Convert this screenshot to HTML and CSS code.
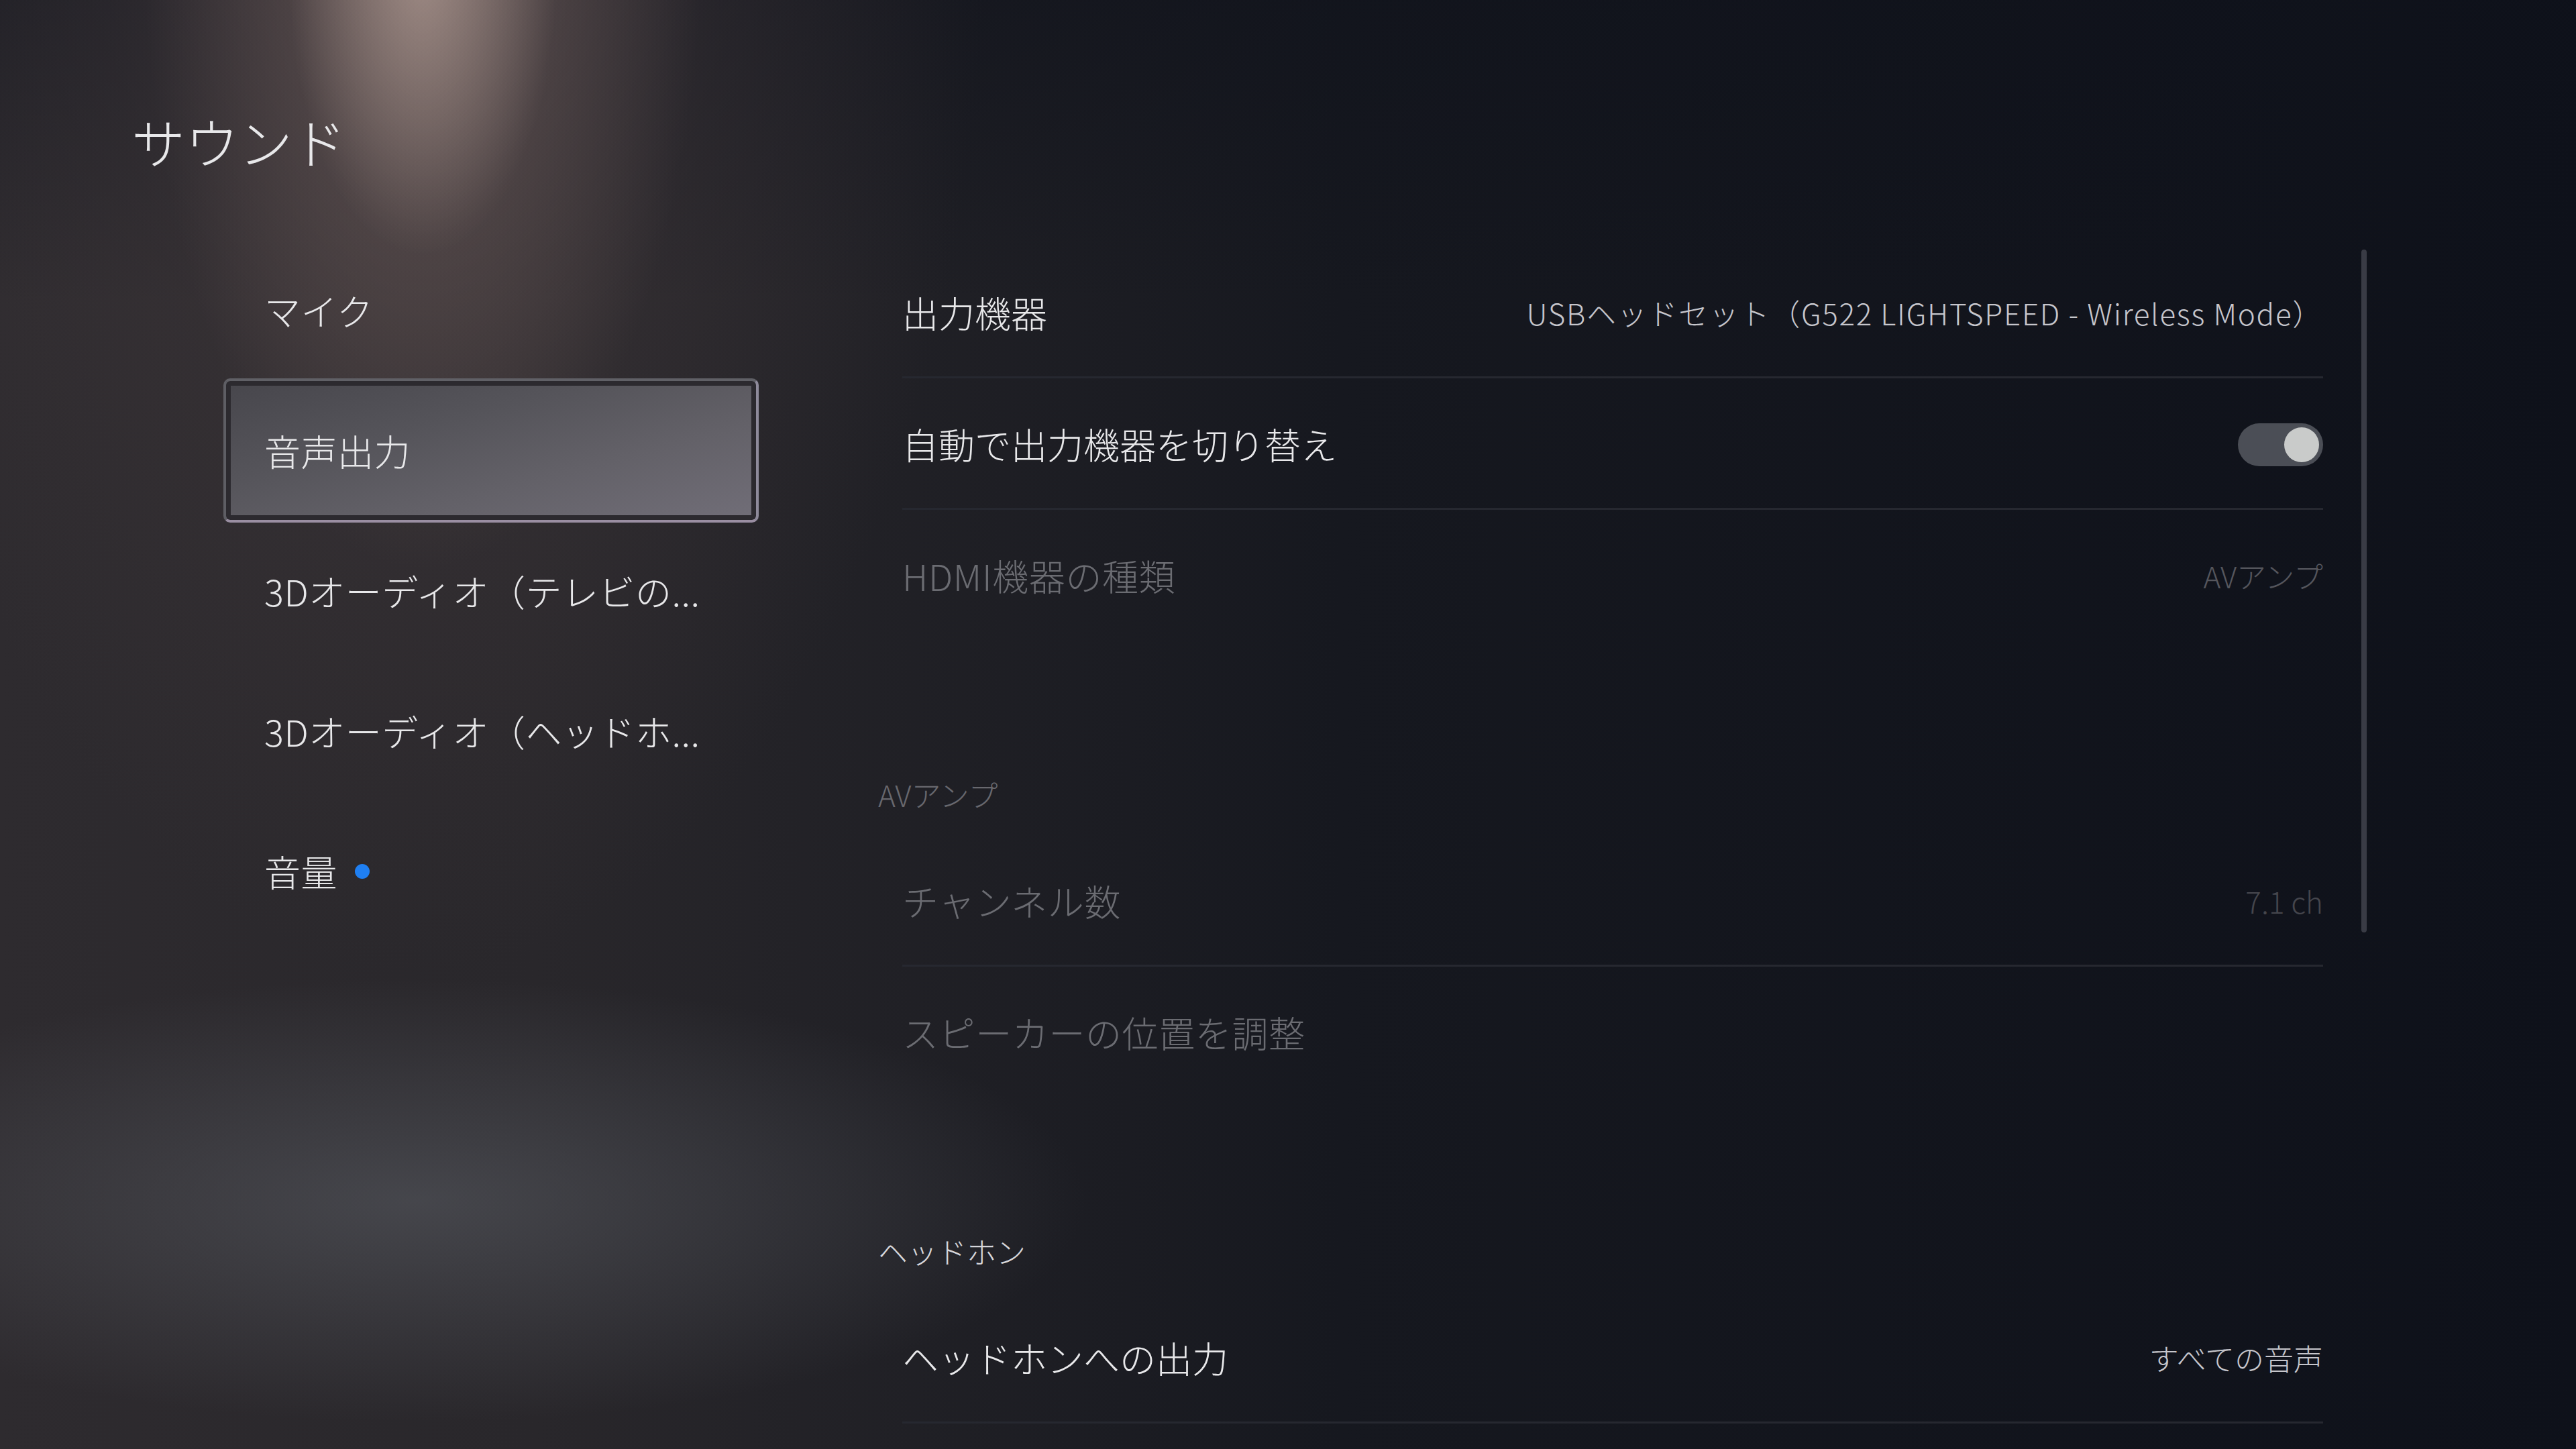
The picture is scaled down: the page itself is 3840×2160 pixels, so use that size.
FILE: index.html
```html
<!DOCTYPE html>
<html lang="ja">
<head>
    <meta charset="UTF-8">
    <meta name="viewport" content="width=device-width, initial-scale=1.0">
    <title>サウンド</title>
    <link rel="stylesheet" href="styles.css">
</head>
<body>
    <div class="screen">
        <header class="page-header">
            <h1 class="page-title">サウンド</h1>
        </header>

        <div class="layout">
            <!-- Menu de gauche -->
            <nav class="side-menu">
                <div class="menu-item">マイク</div>
                <div class="menu-item selected">音声出力</div>
                <div class="menu-item">3Dオーディオ（テレビの...</div>
                <div class="menu-item">3Dオーディオ（ヘッドホ...</div>
                <div class="menu-item">音量<span class="badge-dot"></span></div>
            </nav>

            <!-- Liste des réglages -->
            <main class="settings">
                <div class="settings-list">
                    <div class="setting-row">
                        <span class="setting-label">出力機器</span>
                        <span class="setting-value spaced">USBヘッドセット（G522 LIGHTSPEED - Wireless Mode）</span>
                    </div>
                    <div class="setting-row">
                        <span class="setting-label">自動で出力機器を切り替え</span>
                        <span class="toggle"><span class="toggle-knob"></span></span>
                    </div>
                    <div class="setting-row disabled no-line">
                        <span class="setting-label">HDMI機器の種類</span>
                        <span class="setting-value">AVアンプ</span>
                    </div>

                    <div class="section-title disabled">AVアンプ</div>
                    <div class="setting-row disabled">
                        <span class="setting-label">チャンネル数</span>
                        <span class="setting-value faint">7.1 ch</span>
                    </div>
                    <div class="setting-row disabled no-line">
                        <span class="setting-label">スピーカーの位置を調整</span>
                    </div>

                    <div class="section-title">ヘッドホン</div>
                    <div class="setting-row">
                        <span class="setting-label">ヘッドホンへの出力</span>
                        <span class="setting-value">すべての音声</span>
                    </div>
                </div>
                <div class="scrollbar"></div>
            </main>
        </div>
    </div>
</body>
</html>
```

FILE: styles.css
```css
/* Page entière */
html, body {
    margin: 0;
    padding: 0;
}

body {
    width: 3840px;
    height: 2160px;
    overflow: hidden;
    font-family: "Noto Sans CJK JP", "Noto Sans", sans-serif;
    font-weight: 300;
    color: #e6e6e8;
    background-color: #0f121b;
    background-image:
        radial-gradient(ellipse 200px 420px at 630px -40px, rgba(215, 190, 178, 0.45), rgba(215, 190, 178, 0) 100%),
        radial-gradient(ellipse 420px 1000px at 630px -150px, rgba(170, 145, 138, 0.5), rgba(130, 110, 106, 0.28) 50%, rgba(80, 70, 70, 0) 100%),
        radial-gradient(ellipse 850px 1600px at 620px -150px, rgba(100, 84, 84, 0.5), rgba(72, 62, 64, 0.28) 55%, rgba(50, 45, 50, 0) 100%),
        radial-gradient(ellipse 1000px 330px at 620px 1790px, rgba(92, 95, 102, 0.55), rgba(92, 95, 102, 0) 100%),
        linear-gradient(180deg, rgba(15, 18, 27, 0.55) 0, rgba(15, 18, 27, 0) 450px),
        linear-gradient(90deg, #2e2b2f 0, #29272b 800px, #16181f 2000px, #0e111a 3840px);
}

.screen {
    height: 100%;
}

/* En-tête */
.page-header {
    padding: 159px 0 0 196px;
}

.page-title {
    margin: 0;
    font-size: 80px;
    font-weight: 300;
    line-height: 100px;
    color: #e8e8ea;
}

/* Disposition principale */
.layout {
    display: flex;
    margin-top: 99px;
    padding-left: 333px;
    gap: 178px;
}

/* Menu de gauche */
.side-menu {
    width: 798px;
    flex-shrink: 0;
}

.menu-item {
    height: 209px;
    box-sizing: border-box;
    display: flex;
    align-items: center;
    padding-left: 61px;
    font-size: 54px;
    letter-spacing: 0.5px;
    white-space: nowrap;
    color: #e8e8ea;
}

.menu-item.selected {
    height: 215px;
    margin: -3px 0;
    padding-left: 57px;
    border: 4px solid #6a6a71;
    border-color: #606066 #8e8a9a #9a8ea2 #5e5e64;
    border-radius: 10px;
    box-shadow: inset 0 0 0 7px #2c2a2f;
    background: linear-gradient(165deg, #47464c 0%, #55545a 35%, #636168 65%, #716e78 100%);
}

.badge-dot {
    width: 22px;
    height: 22px;
    margin-left: 26px;
    border-radius: 50%;
    background-color: #1f7ff2;
}

/* Liste des réglages */
.settings {
    display: flex;
    gap: 57px;
}

.settings-list {
    width: 2154px;
    padding-top: 10px;
}

.setting-row {
    height: 196px;
    box-sizing: border-box;
    margin-left: 36px;
    padding-top: 4px;
    display: flex;
    align-items: center;
    justify-content: space-between;
    border-bottom: 3px solid #262830;
}

.setting-row.no-line {
    border-bottom-color: transparent;
}

.setting-label {
    font-size: 54px;
    line-height: 1.2;
    color: #e8e8ea;
}

.setting-value {
    font-size: 44px;
    line-height: 1.2;
    color: #c6c6cc;
    white-space: nowrap;
}

.setting-value.spaced {
    letter-spacing: 1.7px;
}

.setting-row.disabled .setting-label {
    color: #6b6c72;
    letter-spacing: 0.6px;
}

.setting-row.disabled .setting-value {
    color: #55565d;
}

.setting-row.disabled .setting-value.faint {
    color: #45464d;
}

/* Titres de section */
.section-title {
    padding: 198px 0 31px;
    font-size: 44px;
    line-height: 60px;
    color: #d6d6da;
}

.section-title.disabled {
    color: #68686e;
}

/* Interrupteur */
.toggle {
    width: 127px;
    height: 64px;
    box-sizing: border-box;
    padding: 6px;
    display: flex;
    justify-content: flex-end;
    border-radius: 32px;
    background-color: #4b4e56;
}

.toggle-knob {
    width: 52px;
    height: 52px;
    border-radius: 50%;
    background-color: #c9cbca;
}

/* Barre de défilement */
.scrollbar {
    width: 8px;
    height: 1018px;
    margin-top: 14px;
    border-radius: 4px;
    background-color: #393b45;
}
```
